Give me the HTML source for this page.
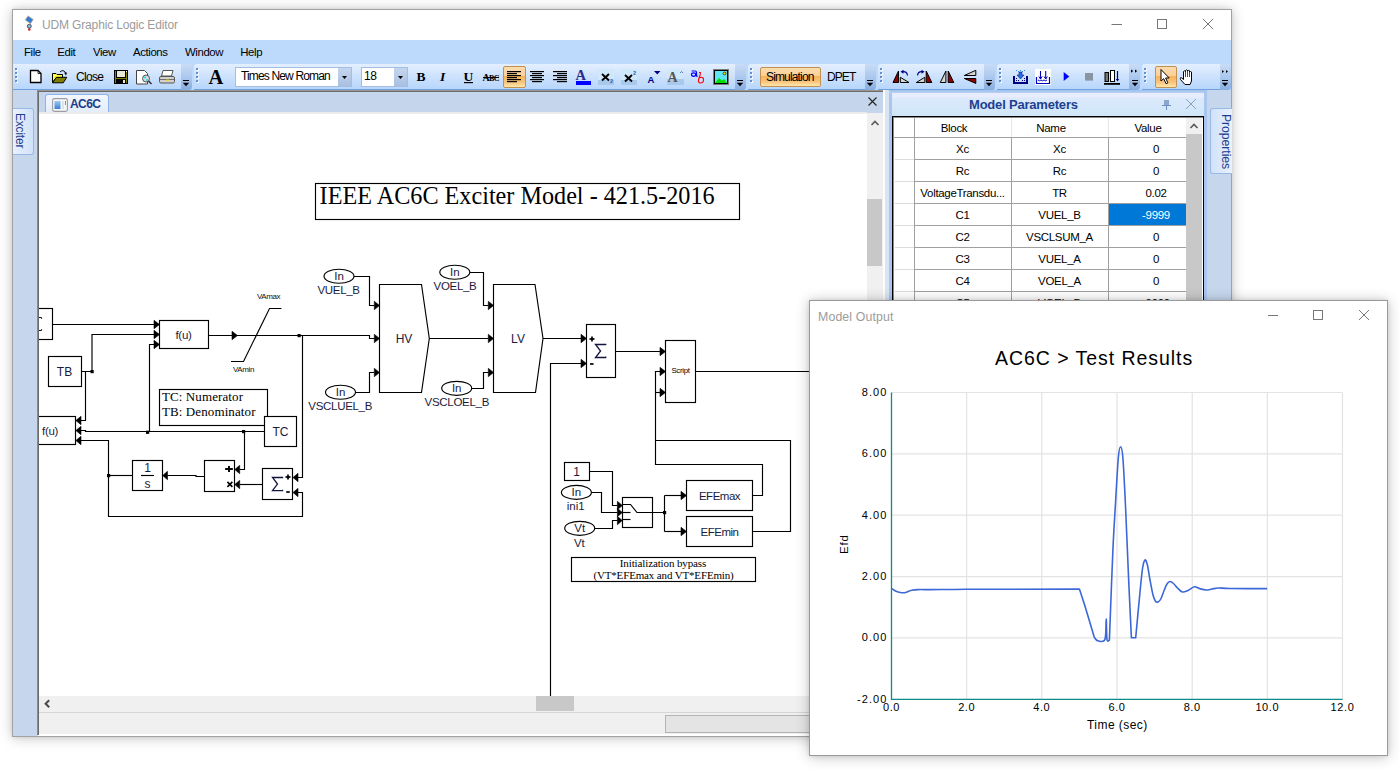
<!DOCTYPE html>
<html><head><meta charset="utf-8">
<style>
*{margin:0;padding:0;box-sizing:border-box}
html,body{width:1399px;height:770px;overflow:hidden;background:#fff;font-family:"Liberation Sans",sans-serif;position:relative}
.a{position:absolute}
.t{position:absolute;white-space:nowrap;line-height:1}
#win{left:12px;top:9px;width:1220px;height:728px;border:1px solid #a2a2a2;background:#fff;box-shadow:0 0 4px rgba(0,0,0,0.1),0 1px 13px rgba(0,0,0,0.22)}
#menubar{left:13px;top:40px;width:1218px;height:50px;background:#bdd9fc}
.strip{position:absolute;top:64px;height:26px;border-radius:3px 3px 0 0;background:linear-gradient(#e4effe,#cfe3fd 45%,#b7d6fc);border-bottom:1px solid #70a0e0}
.ovf{position:absolute;top:64px;height:26px;width:11px;border-radius:0 3px 3px 0;background:linear-gradient(#c9dcf6,#a6c4ec 60%,#86acdf)}
.grip{position:absolute;top:68px;width:2px;height:14px;background:repeating-linear-gradient(#5f8fd6 0 2px,transparent 2px 4px);filter:drop-shadow(1px 1px 0 #fff)}
#leftbar{left:13px;top:90px;width:25px;height:646px;background:#c6d7ed}
#docborder{left:37px;top:90px;width:2px;height:645px;background:linear-gradient(90deg,#8a8a8a 50%,#6a6a6a 50%)}
#tabstrip{left:39px;top:91px;width:844px;height:22px;background:#c5d6ec}
#canvas{left:39px;top:113px;width:828px;height:583px;background:#fff;overflow:hidden}
#vscroll{left:867px;top:113px;width:16px;height:583px;background:#f0f0f0}
#hscroll{left:39px;top:696px;width:828px;height:16px;background:#f0f0f0}
#status{left:39px;top:712px;width:1192px;height:23px;background:#f0f0f0;border-top:1px solid #d6d6d6}
.hl{border:1px solid #c2914f;border-radius:2px;background:linear-gradient(#fbdcae 0%,#f9cf98 45%,#f7b257 46%,#f9c37a 75%,#fde7ac 100%)}
#mo{left:809px;top:300px;width:579px;height:456px;border:1px solid #9a9a9a;background:#fff;box-shadow:0 0 4px rgba(0,0,0,0.1),0 1px 13px rgba(0,0,0,0.24)}
</style></head><body>
<div id="win" class="a"></div>
<div id="menubar" class="a"></div>
<div id="leftbar" class="a"></div>
<div id="docborder" class="a"></div>
<div id="tabstrip" class="a"></div>
<div id="canvas" class="a"></div>
<div id="vscroll" class="a"></div>
<div id="hscroll" class="a"></div>
<div id="status" class="a"></div>
<!-- title bar -->
<svg class="a" style="left:22px;top:15px" width="14" height="18" viewBox="0 0 14 18">
 <rect x="4" y="2.2" width="6.5" height="5" transform="rotate(35 7.2 4.7)" fill="#2f80d2" stroke="#f0b080" stroke-width="0.6"/>
 <circle cx="7.3" cy="11.2" r="2" fill="#8fb7e0" stroke="#222" stroke-width="0.7"/>
 <circle cx="7.3" cy="14.5" r="1.3" fill="#d02020"/>
</svg>
<div class="t" style="left:42px;top:19px;font-size:12px;color:#9b9b9b;letter-spacing:-0.15px">UDM Graphic Logic Editor</div>
<svg class="a" style="left:1100px;top:14px" width="125" height="20">
 <line x1="11.5" y1="10.5" x2="22" y2="10.5" stroke="#777" stroke-width="1"/>
 <rect x="57.5" y="5.5" width="9" height="9" fill="none" stroke="#777" stroke-width="1"/>
 <path d="M103 5 L113 15 M113 5 L103 15" stroke="#777" stroke-width="1"/>
</svg>
<!-- menu -->
<div class="t" style="left:24px;top:46.6px;font-size:11.4px;color:#000;letter-spacing:-0.4px">File</div>
<div class="t" style="left:57.3px;top:46.6px;font-size:11.4px;color:#000;letter-spacing:-0.4px">Edit</div>
<div class="t" style="left:93px;top:46.6px;font-size:11.4px;color:#000;letter-spacing:-0.4px">View</div>
<div class="t" style="left:133px;top:46.6px;font-size:11.4px;color:#000;letter-spacing:-0.4px">Actions</div>
<div class="t" style="left:185px;top:46.6px;font-size:11.4px;color:#000;letter-spacing:-0.4px">Window</div>
<div class="t" style="left:240.3px;top:46.6px;font-size:11.4px;color:#000;letter-spacing:-0.4px">Help</div>
<!-- toolbar strips -->
<div class="strip" style="left:13px;width:170px;border-radius:0 3px 0 0"></div><div class="ovf" style="left:181px"></div>
<div class="strip" style="left:194px;width:544px"></div><div class="ovf" style="left:735px"></div>
<div class="strip" style="left:748px;width:120px"></div><div class="ovf" style="left:865px"></div>
<div class="strip" style="left:878px;width:109px"></div><div class="ovf" style="left:984px"></div>
<div class="strip" style="left:997px;width:135px"></div><div class="ovf" style="left:1129px"></div>
<div class="strip" style="left:1142px;width:81px"></div><div class="ovf" style="left:1220px"></div>
<div class="grip" style="left:15px"></div>
<div class="grip" style="left:196px"></div>
<div class="grip" style="left:750px"></div>
<div class="grip" style="left:880px"></div>
<div class="grip" style="left:999px"></div>
<div class="grip" style="left:1144px"></div>
<!-- overflow arrows -->
<svg class="a" style="left:0;top:60px" width="1399" height="32">
 <g fill="#000" stroke="none">
  <rect x="183" y="20" width="6" height="1" shape-rendering="crispEdges"/><path d="M182.8 22.8 h6.4 l-3.2 3.4 z"/><rect x="737" y="20" width="6" height="1" shape-rendering="crispEdges"/><path d="M736.8 22.8 h6.4 l-3.2 3.4 z"/><rect x="867" y="20" width="6" height="1" shape-rendering="crispEdges"/><path d="M866.8 22.8 h6.4 l-3.2 3.4 z"/><rect x="986" y="20" width="6" height="1" shape-rendering="crispEdges"/><path d="M985.8 22.8 h6.4 l-3.2 3.4 z"/><rect x="1132" y="20" width="6" height="1" shape-rendering="crispEdges"/><path d="M1131.8 22.8 h6.4 l-3.2 3.4 z"/><rect x="1222" y="20" width="6" height="1" shape-rendering="crispEdges"/><path d="M1221.8 22.8 h6.4 l-3.2 3.4 z"/>
  <path d="M1131 9.5 l2.2 1.6 l-2.2 1.6z M1135 9.5 l2.2 1.6 l-2.2 1.6z"/>
  <path d="M1222 10 l2 1.5 l-2 1.5z M1226 10 l2 1.5 l-2 1.5z"/>
 </g>
</svg>

<!-- highlighted buttons -->
<div class="a hl" style="left:503px;top:66px;width:23px;height:22px"></div>
<div class="a hl" style="left:760px;top:67px;width:61px;height:20px"></div>
<div class="a hl" style="left:1155px;top:66px;width:22px;height:22px"></div>
<!-- combos -->
<div class="a" style="left:235px;top:67px;width:117px;height:20px;background:#fff;border:1px solid #a3bde3"></div>
<div class="a" style="left:338px;top:68px;width:13px;height:18px;background:linear-gradient(#c5d6ee,#a9c0e2)"></div>
<div class="t" style="left:241px;top:70px;font-size:12px;color:#000;letter-spacing:-0.85px">Times New Roman</div>
<div class="a" style="left:361px;top:67px;width:47px;height:20px;background:#fff;border:1px solid #a3bde3"></div>
<div class="a" style="left:394px;top:68px;width:13px;height:18px;background:linear-gradient(#c5d6ee,#a9c0e2)"></div>
<div class="t" style="left:364px;top:70px;font-size:12px;color:#000;letter-spacing:-0.5px">18</div>
<div class="t" style="left:76px;top:71px;font-size:12px;color:#000;letter-spacing:-0.7px">Close</div>
<div class="t" style="left:766px;top:71px;font-size:12px;color:#000;letter-spacing:-0.85px">Simulation</div>
<div class="t" style="left:827px;top:71px;font-size:12px;color:#000;letter-spacing:-0.9px">DPET</div>
<svg class="a" style="left:0;top:0" width="1399" height="95" viewBox="0 0 1399 95">
 <!-- combo arrows -->
 <path d="M342 76 h5 l-2.5 3z M398 76 h5 l-2.5 3z" fill="#000"/>
 <!-- new doc -->
 <path d="M30.5 70.5 h7.5 l3 3 v9 h-10.5z" fill="#fff" stroke="#000" stroke-width="1.3"/>
 <path d="M38 70.5 v3 h3" fill="none" stroke="#000" stroke-width="0.8"/>
 <!-- open folder -->
 <path d="M52.5 73.5 h3.5 l1 1 h5.5 v3 h-6 l-4 5z" fill="#ffff40" stroke="#000" stroke-width="1"/>
 <path d="M52.5 82.8 l3.8 -5.5 h10.5 l-3.5 5.5z" fill="#808000" stroke="#000" stroke-width="1"/>
 <path d="M60 72 q3 -3 5.5 0.5" fill="none" stroke="#000" stroke-width="1"/>
 <path d="M64 72.5 h3 l-1 3z" fill="#000"/>
 <!-- save -->
 <rect x="114" y="70" width="14" height="14" fill="#000"/>
 <rect x="115" y="71" width="12" height="12" fill="#808000"/>
 <rect x="116" y="71" width="10" height="7" fill="#000"/>
 <rect x="117" y="71" width="8" height="6" fill="#e8e8d8"/>
 <rect x="116" y="79" width="10" height="5" fill="#000"/>
 <rect x="123" y="80" width="2" height="3" fill="#e8e8d8"/>
 <rect x="126" y="71" width="1" height="1" fill="#fff"/>
 <!-- preview -->
 <path d="M136.5 70.5 h8 l3 3 v10.5 h-11z" fill="#fff" stroke="#444" stroke-width="1"/>
 <circle cx="146" cy="78.5" r="3.5" fill="#d8d8d8" stroke="#555" stroke-width="1"/>
 <circle cx="145" cy="77.5" r="1" fill="#00e0ff"/><circle cx="147" cy="80" r="0.9" fill="#00e0ff"/>
 <path d="M148.5 81 l3 3" stroke="#333" stroke-width="1.6"/>
 <!-- printer -->
 <path d="M161.5 76 l1.5 -5.5 h10 l-1.5 5.5z" fill="#fff" stroke="#555" stroke-width="1"/>
 <rect x="159.5" y="76.5" width="15" height="6.5" rx="1.5" fill="#d0d0d0" stroke="#555" stroke-width="1"/>
 <line x1="160" y1="79.5" x2="174" y2="79.5" stroke="#555" stroke-width="0.8"/>
 <rect x="166" y="79.6" width="3" height="1" fill="#ffd800"/>
 <!-- A -->
 <text x="208.5" y="84" font-family="Liberation Serif" font-weight="700" font-size="20.5" fill="#000">A</text>
 <!-- B I U abc -->
 <text x="416.5" y="81" font-family="Liberation Serif" font-weight="700" font-size="13.5" fill="#000">B</text>
 <text x="440" y="81" font-family="Liberation Serif" font-weight="700" font-style="italic" font-size="13.5" fill="#000">I</text>
 <text x="463.5" y="81" font-family="Liberation Serif" font-weight="700" font-size="13.5" fill="#000">U</text>
 <rect x="464" y="82" width="9" height="1.2" fill="#000"/>
 <text x="482.5" y="81" font-family="Liberation Serif" font-weight="700" font-size="10" fill="#000" letter-spacing="-0.8">A</text>
 <text x="489" y="81" font-family="Liberation Serif" font-weight="700" font-size="8" fill="#000" letter-spacing="-0.5">BC</text>
 <rect x="483" y="77" width="16" height="1" fill="#000"/>
 <!-- align -->
 <g fill="#000">
  <rect x="507" y="71" width="14" height="1.2"/><rect x="507" y="73" width="10" height="1.2"/><rect x="507" y="75" width="14" height="1.2"/><rect x="507" y="77" width="10" height="1.2"/><rect x="507" y="79" width="14" height="1.2"/><rect x="507" y="81" width="10" height="1.2"/>
  <rect x="530" y="71" width="14" height="1.2"/><rect x="532" y="73" width="10" height="1.2"/><rect x="530" y="75" width="14" height="1.2"/><rect x="532" y="77" width="10" height="1.2"/><rect x="530" y="79" width="14" height="1.2"/><rect x="532" y="81" width="10" height="1.2"/>
  <rect x="553" y="71" width="14" height="1.2"/><rect x="557" y="73" width="10" height="1.2"/><rect x="553" y="75" width="14" height="1.2"/><rect x="557" y="77" width="10" height="1.2"/><rect x="553" y="79" width="14" height="1.2"/><rect x="557" y="81" width="10" height="1.2"/>
 </g>
 <!-- font color -->
 <text x="575.5" y="79.5" font-family="Liberation Serif" font-weight="700" font-size="14.5" fill="#2a2a8a">A</text>
 <rect x="576" y="81" width="15" height="4" fill="#0000ff"/>
 <!-- sub/superscript -->
 <rect x="598" y="69" width="16" height="11" fill="#cfe9fb"/><rect x="598" y="80" width="16" height="5" fill="#a9c9ea"/>
 <rect x="621" y="69" width="16" height="11" fill="#cfe9fb"/><rect x="621" y="80" width="16" height="5" fill="#a9c9ea"/>
 <path d="M602 74 l7 6.5 M609 74 l-7 6.5" stroke="#000" stroke-width="1.9"/>
 <text x="610" y="83" font-family="Liberation Sans" font-weight="700" font-size="5.5" fill="#1f5fbf">2</text>
 <path d="M625 75 l7 6.5 M632 75 l-7 6.5" stroke="#000" stroke-width="1.9"/>
 <text x="633" y="75" font-family="Liberation Sans" font-weight="700" font-size="5.5" fill="#1f5fbf">2</text>
 <!-- shrink -->
 <text x="647.5" y="83" font-family="Liberation Sans" font-weight="700" font-size="9.5" fill="#00008c">A</text>
 <path d="M654 71 h6.5 l-3.25 3.5z" fill="#00008c"/>
 <!-- grow -->
 <rect x="667" y="69" width="17" height="10" fill="#cfe9fb"/><rect x="667" y="79" width="17" height="6" fill="#a9c9ea"/>
 <text x="667.5" y="82" font-family="Liberation Serif" font-weight="700" font-size="14" fill="#555">A</text>
 <path d="M680 73 l1.5 -1.5 l1.5 1.5" fill="none" stroke="#4a6fae" stroke-width="0.9"/>
 <!-- ab -->
 <path d="M691.6 71 h3.6 q1.3 0 1.3 1.3 V76.2 h1.2" fill="none" stroke="#0000ff" stroke-width="1.2"/>
 <ellipse cx="693.6" cy="74.6" rx="2.1" ry="1.7" fill="none" stroke="#0000ff" stroke-width="1.2"/>
 <path d="M699 72.5 h1.3 v2 l-1.8 5 q-0.6 3.5 2.2 3.5 q2.8 0 2.8 -3.2 q0 -2.8 -2.6 -2.6 l-1.5 0.8" fill="none" stroke="#ff0000" stroke-width="1.1"/>
 <!-- image -->
 <rect x="713" y="69" width="16" height="16" fill="#7a7a7a"/>
 <rect x="714" y="70" width="14" height="14" fill="#000"/>
 <rect x="715" y="71" width="12" height="12" fill="#5fe6f4"/>
 <path d="M715 83 l4 -5 l3 2.5 l2 -1.5 l3 4z" fill="#00e000"/>
 <circle cx="724.5" cy="73.5" r="1.4" fill="#ffe000" stroke="#000" stroke-width="0.6"/>
 <!-- rotate/flip -->
 <g stroke="#000" stroke-width="1" stroke-linejoin="miter">
  <path d="M893 82.5 L898.5 71 V82.5z" fill="#900000"/>
  <path d="M900.3 77.3 V82.5 H909z" fill="#d4d4d4"/>
  <path d="M916.3 82.5 L924.8 77.3 V82.5z" fill="#d4d4d4"/>
  <path d="M926.2 71 V82.5 H931.8z" fill="#900000"/>
  <path d="M940.3 82.5 L945.9 71 V82.5z" fill="#d4d4d4"/>
  <path d="M948.2 71 V82.5 H953.8z" fill="#900000"/>
  <path d="M964.3 75.5 L975.8 70.3 V75.5z" fill="#d4d4d4"/>
  <path d="M964.3 78.5 H975.8 V83.4z" fill="#900000"/>
 </g>
 <path d="M907.5 75.5 q-0.5 -4 -4.5 -3.8" fill="none" stroke="#00008c" stroke-width="1.2"/>
 <path d="M900.5 71.7 l3 -2 v4z" fill="#00008c"/>
 <path d="M917.5 75.5 q0.5 -4 4.5 -3.8" fill="none" stroke="#00008c" stroke-width="1.2"/>
 <path d="M924.5 71.7 l-3 -2 v4z" fill="#00008c"/>
 <!-- import -->
 <path d="M1013 76 h2 v6 h11 v-6 h2 v8 h-15z" fill="#000080"/>
 <g fill="#000080"><rect x="1016" y="80" width="1" height="1"/><rect x="1018" y="80" width="1" height="1"/><rect x="1022" y="80" width="1" height="1"/><rect x="1024" y="80" width="1" height="1"/><rect x="1016" y="78" width="1" height="1"/><rect x="1024" y="78" width="1" height="1"/></g>
 <g fill="#3a8ef0"><rect x="1016" y="70" width="1" height="1"/><rect x="1018" y="71" width="1" height="1"/><rect x="1022" y="71" width="1" height="1"/><rect x="1024" y="70" width="1" height="1"/><rect x="1020" y="70" width="1" height="1"/></g>
 <path d="M1019 72 h3 v3 h2 l-3.5 4 l-3.5 -4 h2z" fill="#1f6fe0" stroke="#000080" stroke-width="0.5"/>
 <!-- export -->
 <rect x="1035" y="69" width="16" height="16" fill="#fff"/>
 <path d="M1036.5 77 v6.5 h13 v-6.5" fill="none" stroke="#0000c0" stroke-width="1.2"/>
 <path d="M1038 80 q1.5 1.5 3 0 q1.5 1.5 3 0 q1.5 1.5 3 0" fill="none" stroke="#0000c0" stroke-width="1"/>
 <path d="M1040.5 71 v8 M1045.7 71 v8" stroke="#0000c0" stroke-width="1.1"/>
 <path d="M1038.8 76.5 l1.7 2.5 l1.7 -2.5 M1044 76.5 l1.7 2.5 l1.7 -2.5" fill="none" stroke="#0000c0" stroke-width="1"/>
 <!-- play stop -->
 <path d="M1063.7 72 L1069.3 76.5 L1063.7 81z" fill="#0000ff"/>
 <rect x="1085" y="73" width="8" height="7.6" fill="#8a95a2"/>
 <!-- chart -->
 <rect x="1105" y="72.5" width="3.5" height="9" fill="#777" stroke="#000" stroke-width="1"/>
 <rect x="1110.5" y="70.5" width="4" height="11" fill="#fff" stroke="#000" stroke-width="1"/>
 <path d="M1117.5 71 v9" stroke="#00008c" stroke-width="1.2"/><path d="M1115.8 79 h3.4 l-1.7 2.5z" fill="#00008c"/>
 <rect x="1104" y="83" width="16" height="1.8" fill="#000"/>
 <!-- pointer -->
 <path d="M1161 69.5 V81 l2.7 -2.3 l2.4 5 l1.8 -0.9 l-2.3 -4.8 h3.6z" fill="#fff" stroke="#000" stroke-width="1"/>
 <!-- hand -->
 <path d="M1185 84.5 l-4.5 -5 q-1 -1.5 0.5 -2 l2.5 2 v-8 q1 -1.3 2 0 v-1 q1 -1.3 2 0 v0.5 q1 -1.2 2 0 v1 q1 -1 2 0 v9 l-1.5 3.5z" fill="#fff" stroke="#000" stroke-width="1"/>
 <path d="M1185.5 71 v6 M1187.5 70 v7 M1189.5 70.5 v6.5" stroke="#000" stroke-width="0.7"/>
</svg>

<!-- left sidebar -->
<div class="a" style="left:13px;top:108px;width:21px;height:47px;border:1px solid #98b8e6;border-left:none;border-radius:0 3px 3px 0;background:linear-gradient(90deg,#e9f1fd,#d0e2f9)"></div>
<div class="t" style="left:26px;top:112.5px;font-size:12px;color:#1d3d8f;transform-origin:0 0;transform:rotate(90deg);letter-spacing:-0.2px">Exciter</div>
<!-- doc frame -->
<div class="a" style="left:38px;top:90px;width:845px;height:2px;background:linear-gradient(#9d9690 50%,#6c6c6c 50%)"></div>
<div class="a" style="left:45px;top:94px;width:64px;height:19px;z-index:0;border:1px solid #90b3e6;border-bottom:none;border-radius:3px 3px 0 0;background:linear-gradient(#f3f7fd,#e3ecf8)"></div>
<svg class="a" style="left:52px;top:98px" width="16" height="14" viewBox="0 0 16 14">
 <defs><linearGradient id="tg" x1="0" y1="0" x2="0" y2="1"><stop offset="0" stop-color="#9cc8f2"/><stop offset="1" stop-color="#3a7ed6"/></linearGradient></defs>
 <rect x="0.6" y="0.6" width="14.8" height="12.8" rx="1.8" fill="#f4f6f8" stroke="#9a9ea4" stroke-width="1.1"/>
 <rect x="2.5" y="3" width="6" height="8" fill="url(#tg)"/>
 <rect x="10" y="3" width="2" height="8" fill="#dfe3e8"/>
 <rect x="13" y="3" width="1" height="4" fill="#5a9ae0"/>
</svg>
<div class="t" style="left:70px;top:98px;font-size:12px;font-weight:700;color:#1d3b8d;letter-spacing:-0.6px">AC6C</div>
<svg class="a" style="left:866px;top:95px" width="14" height="14"><path d="M2.5 2.5 L10.5 10.5 M10.5 2.5 L2.5 10.5" stroke="#222" stroke-width="1.1"/></svg>
<div class="a" style="left:39px;top:112px;width:828px;height:2px;background:#ececec"></div>
<!-- v scroll -->
<div class="a" style="left:867px;top:199px;width:15px;height:67px;background:#c8c8c8"></div>
<svg class="a" style="left:867px;top:116px" width="16" height="14"><path d="M4.5 9 L8 5.5 L11.5 9" fill="none" stroke="#5a5a5a" stroke-width="1.6"/></svg>
<!-- h scroll -->
<div class="a" style="left:536px;top:696px;width:38px;height:15px;background:#c8c8c8"></div>
<svg class="a" style="left:40px;top:696px" width="14" height="16"><path d="M9.2 4.3 L5.6 7.8 L9.2 11.3" fill="none" stroke="#4a4a4a" stroke-width="2"/></svg>
<div class="a" style="left:39px;top:734px;width:1192px;height:1px;background:#fff"></div>
<div class="a" style="left:665px;top:715px;width:170px;height:18px;background:#e4e4e4;border:1px solid #b4b4b4"></div>

<svg class="a" style="left:39px;top:113px" width="828" height="583" viewBox="39 113 828 583"><style>.dg path,.dg rect,.dg ellipse,.dg circle{stroke:#000;stroke-width:1.15;fill:none}.dg path.f,.dg circle.f{fill:#000;stroke:none}.dg rect[fill="#fff"],.dg ellipse,.dg path[fill="#fff"]{fill:#fff}</style><g class="dg"><rect x="20.5" y="308.5" width="32.0" height="31.0" fill="#fff"/>
<path d="M38 317.5 h3 l0.9 1.2 M38 330.5 h3 l0.9 -1.2" style="stroke:#111;stroke-width:1.1;fill:none"/>
<path d="M52.5 324.5 L154 324.5"/>
<path class="f" d="M154 320.3 L159.5 324.5 L154 328.7z" style="stroke:#000;stroke-width:0.6;stroke-linejoin:round"/>
<rect x="159.5" y="320.5" width="49.0" height="28.0" fill="#fff"/>
<path class="f" d="M154 330.3 L159.5 334.5 L154 338.7z" style="stroke:#000;stroke-width:0.6;stroke-linejoin:round"/>
<path class="f" d="M154 340.3 L159.5 344.5 L154 348.7z" style="stroke:#000;stroke-width:0.6;stroke-linejoin:round"/>
<rect x="48.5" y="356.5" width="33.0" height="30.0" fill="#fff"/>
<path d="M81.5 371.5 L92 371.5 L92 334.5 L154 334.5"/>
<rect class="f" x="90.5" y="370.0" width="3.2" height="3.2" style="fill:#000;stroke:none"/>
<path d="M85.5 371.5 L85.5 420.5 L81 420.5"/>
<path class="f" d="M81 416.3 L75.8 420.5 L81 424.7z" style="stroke:#000;stroke-width:0.6;stroke-linejoin:round"/>
<rect x="10.5" y="416.5" width="65.0" height="28.0" fill="#fff"/>
<path class="f" d="M81 426.3 L75.8 430.5 L81 434.7z" style="stroke:#000;stroke-width:0.6;stroke-linejoin:round"/>
<path class="f" d="M81 436.3 L75.8 440.5 L81 444.7z" style="stroke:#000;stroke-width:0.6;stroke-linejoin:round"/>
<path d="M81 430.5 L85.5 430.5 L85.5 431.5 L264.5 431.5"/>
<rect class="f" x="146.0" y="430.7" width="3.2" height="3.2" style="fill:#000;stroke:none"/>
<path d="M149.5 431.5 L149.5 344.5 L154 344.5"/>
<rect class="f" x="242.0" y="430.0" width="3.2" height="3.2" style="fill:#000;stroke:none"/>
<path d="M244.5 431.5 L244.5 469.5 L239.7 469.5"/>
<path class="f" d="M239.7 465.3 L234.8 469.5 L239.7 473.7z" style="stroke:#000;stroke-width:0.6;stroke-linejoin:round"/>
<path d="M81 440.5 L108.5 440.5 L108.5 516.5 L302.5 516.5 L302.5 492.5 L298 492.5"/>
<path class="f" d="M298 488.3 L293 492.5 L298 496.7z" style="stroke:#000;stroke-width:0.6;stroke-linejoin:round"/>
<rect class="f" x="107.0" y="474.0" width="3.2" height="3.2" style="fill:#000;stroke:none"/>
<path d="M108.5 475.5 L132.5 475.5"/>
<rect x="132.5" y="460.5" width="30.0" height="30.0" fill="#fff"/>
<path d="M141 475.5 L154 475.5"/>
<path class="f" d="M167.5 471.3 L162.7 475.5 L167.5 479.7z" style="stroke:#000;stroke-width:0.6;stroke-linejoin:round"/>
<path d="M167.5 475.5 L196 475.5 L196 476.5 L204.5 476.5"/>
<rect x="204.5" y="460.5" width="30.0" height="31.0" fill="#fff"/>
<rect class="f" x="225.1" y="468.05" width="7.8" height="1.9" style="fill:#000;stroke:none"/>
<rect class="f" x="228.05" y="466.0" width="1.9" height="6" style="fill:#000;stroke:none"/>
<path d="M227.4 481.9 L232.4 486.9 M232.4 481.9 L227.4 486.9" style="stroke:#000;stroke-width:1.6"/>
<path class="f" d="M239.7 480.3 L234.8 484.5 L239.7 488.7z" style="stroke:#000;stroke-width:0.6;stroke-linejoin:round"/>
<path d="M239.7 484.5 L262.5 484.5"/>
<rect x="262.5" y="468.5" width="30.0" height="31.0" fill="#fff"/>
<path d="M282.5 478.2 V477.5 H272.5 L277.46 484.1 L272.5 490.7 H282.5 V489.7" style="stroke:#141440;stroke-width:1.3;fill:none;stroke-linejoin:miter"/>
<rect class="f" x="285.5" y="476.15" width="5" height="1.7" style="fill:#000;stroke:none"/>
<rect class="f" x="287.15" y="474.5" width="1.7" height="5" style="fill:#000;stroke:none"/>
<rect class="f" x="286.25" y="491.15" width="3.5" height="1.7" style="fill:#000;stroke:none"/>
<path class="f" d="M298 473.3 L293 477.5 L298 481.7z" style="stroke:#000;stroke-width:0.6;stroke-linejoin:round"/>
<path d="M302.5 335.5 L302.5 477.5 L298 477.5"/>
<path d="M208.5 335.5 L369.5 335.5 L369.5 338.5 L374.3 338.5"/>
<path class="f" d="M232 331.3 L237.5 335.5 L232 339.7z" style="stroke:#000;stroke-width:0.6;stroke-linejoin:round"/>
<rect class="f" x="297.5" y="334.0" width="3.2" height="3.2" style="fill:#000;stroke:none"/>
<path d="M231 361.5 L243.5 361.5 L269.5 308.5 L281.5 308.5"/>
<rect x="159.5" y="389.5" width="108.0" height="36.0" fill="#fff"/>
<rect x="264.5" y="416.5" width="32.0" height="30.0" fill="#fff"/>
<rect x="315.5" y="183.5" width="424.0" height="36.0" fill="#fff"/>
<ellipse cx="339" cy="276.2" rx="15" ry="7" fill="#fff"/>
<path d="M354 276.5 L369.5 276.5 L369.5 305.5 L374.3 305.5"/>
<path class="f" d="M374.3 301.3 L379.5 305.5 L374.3 309.7z" style="stroke:#000;stroke-width:0.6;stroke-linejoin:round"/>
<path d="M379.5 284.5 L421.5 284.5 L429.3 338.5 L421.5 392.5 L379.5 392.5z" fill="#fff"/>
<path class="f" d="M374.3 334.3 L379.5 338.5 L374.3 342.7z" style="stroke:#000;stroke-width:0.6;stroke-linejoin:round"/>
<path class="f" d="M374.3 368.3 L379.5 372.5 L374.3 376.7z" style="stroke:#000;stroke-width:0.6;stroke-linejoin:round"/>
<ellipse cx="340.5" cy="392.2" rx="15" ry="7" fill="#fff"/>
<path d="M355.5 392.5 L369.5 392.5 L369.5 372.5 L374.3 372.5"/>
<path d="M429.3 338.5 L488.3 338.5"/>
<path class="f" d="M488.3 334.3 L493.5 338.5 L488.3 342.7z" style="stroke:#000;stroke-width:0.6;stroke-linejoin:round"/>
<ellipse cx="454.8" cy="272.2" rx="15" ry="7" fill="#fff"/>
<path d="M470 272.5 L483.5 272.5 L483.5 305.5 L488.3 305.5"/>
<path class="f" d="M488.3 301.3 L493.5 305.5 L488.3 309.7z" style="stroke:#000;stroke-width:0.6;stroke-linejoin:round"/>
<path d="M493.5 284.5 L535 284.5 L543 338.5 L535.5 392.5 L493.5 392.5z" fill="#fff"/>
<path class="f" d="M488.3 368.3 L493.5 372.5 L488.3 376.7z" style="stroke:#000;stroke-width:0.6;stroke-linejoin:round"/>
<ellipse cx="456.7" cy="388.3" rx="15" ry="7" fill="#fff"/>
<path d="M471.5 388.5 L483.5 388.5 L483.5 372.5 L488.3 372.5"/>
<path d="M543 338.5 L581 338.5"/>
<path class="f" d="M581 334.3 L586.5 338.5 L581 342.7z" style="stroke:#000;stroke-width:0.6;stroke-linejoin:round"/>
<rect x="586.5" y="324.5" width="29.0" height="53.0" fill="#fff"/>
<path d="M605.7 345.2 V344.5 H595.5 L600.5640000000001 351.0 L595.5 357.5 H605.7 V356.5" style="stroke:#141440;stroke-width:1.3;fill:none;stroke-linejoin:miter"/>
<rect class="f" x="589.5" y="338.15" width="5" height="1.7" style="fill:#000;stroke:none"/>
<rect class="f" x="591.15" y="336.5" width="1.7" height="5" style="fill:#000;stroke:none"/>
<rect class="f" x="590.05" y="363.15" width="3.5" height="1.7" style="fill:#000;stroke:none"/>
<path d="M550.5 696 L550.5 363.5 L581 363.5"/>
<path class="f" d="M581 359.3 L586.5 363.5 L581 367.7z" style="stroke:#000;stroke-width:0.6;stroke-linejoin:round"/>
<path d="M615.5 351.5 L660 351.5"/>
<path class="f" d="M660 347.3 L665.5 351.5 L660 355.7z" style="stroke:#000;stroke-width:0.6;stroke-linejoin:round"/>
<rect x="665.5" y="340.5" width="30.0" height="62.0" fill="#fff"/>
<path class="f" d="M660 367.3 L665.5 371.5 L660 375.7z" style="stroke:#000;stroke-width:0.6;stroke-linejoin:round"/>
<path class="f" d="M660 388.3 L665.5 392.5 L660 396.7z" style="stroke:#000;stroke-width:0.6;stroke-linejoin:round"/>
<path d="M660 371.5 L655.5 371.5 L655.5 464.5 L762.5 464.5 L762.5 495.5 L752.5 495.5"/>
<path d="M655.5 392.5 L660 392.5"/>
<path d="M655.5 440.5 L790.5 440.5 L790.5 531.5 L752.5 531.5"/>
<path d="M695.5 371.5 L830 371.5"/>
<rect x="564.5" y="462.5" width="25.0" height="18.0" fill="#fff"/>
<path d="M589.5 471.5 L612.5 471.5 L612.5 505.5 L617.4 505.5"/>
<path class="f" d="M617.4 501.3 L622.3 505.5 L617.4 509.7z" style="stroke:#000;stroke-width:0.6;stroke-linejoin:round"/>
<ellipse cx="576.4" cy="492.4" rx="15" ry="7" fill="#fff"/>
<path d="M591.4 492.5 L601.5 492.5 L601.5 512.5 L617.4 512.5"/>
<path class="f" d="M617.4 508.3 L622.3 512.5 L617.4 516.7z" style="stroke:#000;stroke-width:0.6;stroke-linejoin:round"/>
<ellipse cx="579.7" cy="528.3" rx="15" ry="7" fill="#fff"/>
<path d="M594.6 528.5 L612.5 528.5 L612.5 520.5 L617.4 520.5"/>
<path class="f" d="M617.4 516.3 L622.3 520.5 L617.4 524.7z" style="stroke:#000;stroke-width:0.6;stroke-linejoin:round"/>
<rect x="622.5" y="497.5" width="30.0" height="30.0" fill="#fff"/>
<path d="M622.5 504.5 L630.5 504.5 L637 512.5 L664.5 512.5"/>
<path d="M622.5 512.5 L630.5 512.5"/>
<path d="M622.5 519.5 L630.5 519.5"/>
<rect class="f" x="663.0" y="511.0" width="3.2" height="3.2" style="fill:#000;stroke:none"/>
<path d="M664.5 495.5 L664.5 531.5"/>
<path d="M664.5 495.5 L681 495.5"/>
<path class="f" d="M681 491.3 L686.5 495.5 L681 499.7z" style="stroke:#000;stroke-width:0.6;stroke-linejoin:round"/>
<path d="M664.5 531.5 L681 531.5"/>
<path class="f" d="M681 527.3 L686.5 531.5 L681 535.7z" style="stroke:#000;stroke-width:0.6;stroke-linejoin:round"/>
<rect x="686.5" y="480.5" width="66.0" height="30.0" fill="#fff"/>
<rect x="686.5" y="516.5" width="66.0" height="30.0" fill="#fff"/>
<rect x="571.5" y="557.5" width="184.0" height="24.0" fill="#fff"/></g>
<text x="183.5" y="339" font-size="11.5" text-anchor="middle" font-family="Liberation Sans" letter-spacing="-0.3" fill="#1b1b3c">f(u)</text>
<text x="64.5" y="375.5" font-size="12" text-anchor="middle" font-family="Liberation Sans" letter-spacing="0" fill="#1b1b3c">TB</text>
<text x="42" y="434.5" font-size="11.5" text-anchor="start" font-family="Liberation Sans" letter-spacing="-0.3" fill="#1b1b3c">f(u)</text>
<text x="147.5" y="472" font-size="12" text-anchor="middle" font-family="Liberation Sans" letter-spacing="0" fill="#1b1b3c">1</text>
<text x="147.5" y="488" font-size="12" text-anchor="middle" font-family="Liberation Sans" letter-spacing="0" fill="#1b1b3c">s</text>
<text x="268.5" y="299.4" font-size="8" text-anchor="middle" font-family="Liberation Sans" letter-spacing="-0.4" fill="#111">VAmax</text>
<text x="243.5" y="372.4" font-size="8" text-anchor="middle" font-family="Liberation Sans" letter-spacing="-0.4" fill="#111">VAmin</text>
<text x="162" y="400.5" font-size="13" text-anchor="start" font-family="Liberation Serif" letter-spacing="0.1" fill="#000">TC: Numerator</text>
<text x="162" y="415.5" font-size="13" text-anchor="start" font-family="Liberation Serif" letter-spacing="0.1" fill="#000">TB: Denominator</text>
<text x="280.5" y="435.8" font-size="12" text-anchor="middle" font-family="Liberation Sans" letter-spacing="0" fill="#1b1b3c">TC</text>
<text x="319.6" y="204" font-size="24.2" text-anchor="start" font-family="Liberation Serif" letter-spacing="0" fill="#000">IEEE AC6C Exciter Model - 421.5-2016</text>
<text x="339" y="280.2" font-size="11.5" text-anchor="middle" font-family="Liberation Sans" letter-spacing="0" fill="#1b1b3c">In</text>
<text x="338.6" y="294" font-size="11.5" text-anchor="middle" font-family="Liberation Sans" letter-spacing="-0.3" fill="#1b1b3c">VUEL_B</text>
<text x="404" y="342.9" font-size="12" text-anchor="middle" font-family="Liberation Sans" letter-spacing="0" fill="#1b1b3c">HV</text>
<text x="340.5" y="396.2" font-size="11.5" text-anchor="middle" font-family="Liberation Sans" letter-spacing="0" fill="#1b1b3c">In</text>
<text x="340.2" y="409.8" font-size="11.5" text-anchor="middle" font-family="Liberation Sans" letter-spacing="-0.3" fill="#1b1b3c">VSCLUEL_B</text>
<text x="454.8" y="276.2" font-size="11.5" text-anchor="middle" font-family="Liberation Sans" letter-spacing="0" fill="#1b1b3c">In</text>
<text x="455" y="289.8" font-size="11.5" text-anchor="middle" font-family="Liberation Sans" letter-spacing="-0.3" fill="#1b1b3c">VOEL_B</text>
<text x="518" y="342.9" font-size="12" text-anchor="middle" font-family="Liberation Sans" letter-spacing="0" fill="#1b1b3c">LV</text>
<text x="456.7" y="392.3" font-size="11.5" text-anchor="middle" font-family="Liberation Sans" letter-spacing="0" fill="#1b1b3c">In</text>
<text x="456.8" y="405.5" font-size="11.5" text-anchor="middle" font-family="Liberation Sans" letter-spacing="-0.3" fill="#1b1b3c">VSCLOEL_B</text>
<text x="680.5" y="373.3" font-size="7.8" text-anchor="middle" font-family="Liberation Sans" letter-spacing="-0.3" fill="#000">Script</text>
<text x="576.5" y="475.5" font-size="12" text-anchor="middle" font-family="Liberation Sans" letter-spacing="0" fill="#1b1b3c">1</text>
<text x="576.4" y="496.4" font-size="11.5" text-anchor="middle" font-family="Liberation Sans" letter-spacing="0" fill="#1b1b3c">In</text>
<text x="575.7" y="509.8" font-size="11.5" text-anchor="middle" font-family="Liberation Sans" letter-spacing="0" fill="#1b1b3c">ini1</text>
<text x="579.7" y="532.4" font-size="11.5" text-anchor="middle" font-family="Liberation Sans" letter-spacing="0" fill="#1b1b3c">Vt</text>
<text x="579.4" y="546.5" font-size="11.5" text-anchor="middle" font-family="Liberation Sans" letter-spacing="0" fill="#1b1b3c">Vt</text>
<text x="719.5" y="499.8" font-size="11.5" text-anchor="middle" font-family="Liberation Sans" letter-spacing="-0.5" fill="#1b1b3c">EFEmax</text>
<text x="719.5" y="536" font-size="11.5" text-anchor="middle" font-family="Liberation Sans" letter-spacing="-0.5" fill="#1b1b3c">EFEmin</text>
<text x="663" y="567" font-size="11" text-anchor="middle" font-family="Liberation Serif" letter-spacing="-0.12" fill="#000">Initialization bypass</text>
<text x="663.5" y="578.5" font-size="11" text-anchor="middle" font-family="Liberation Serif" letter-spacing="-0.15" fill="#000">(VT*EFEmax and VT*EFEmin)</text></svg>
<div class="a" style="left:883px;top:90px;width:2px;height:210px;background:#fbfcfe"></div>
<div class="a" style="left:885px;top:90px;width:4px;height:210px;background:#dbe5f2"></div>
<div class="a" style="left:889px;top:90px;width:3px;height:210px;background:#a9c6ee"></div>
<div class="a" style="left:889px;top:90px;width:318px;height:3px;background:linear-gradient(#9fc0ec,#b8d2f4)"></div>
<div class="a" style="left:892px;top:93px;width:312px;height:207px;background:#fff"></div>
<div class="a" style="left:892px;top:93px;width:312px;height:23px;background:linear-gradient(#e9ecfd 0,#e9ecfd 4px,#dbe9fb 5px,#cfe7f8)"></div>
<div class="a" style="left:1204px;top:90px;width:3px;height:210px;background:#a9c6ee"></div>
<div class="a" style="left:1207px;top:90px;width:24px;height:210px;background:#c6d7ed"></div>
<div class="a" style="left:1210px;top:108px;width:22px;height:66px;border:1px solid #98b8e6;border-right:none;border-radius:3px 0 0 3px;background:linear-gradient(90deg,#d0e2f9,#e9f1fd)"></div>
<div class="t" style="left:1231.5px;top:113.5px;font-size:12.3px;color:#1d3d8f;transform-origin:0 0;transform:rotate(90deg);letter-spacing:-0.1px">Properties</div>
<div class="t" style="left:969px;top:97.5px;font-size:13px;font-weight:700;color:#1e3f91;letter-spacing:-0.2px">Model Parameters</div>
<svg class="a" style="left:1158px;top:96px" width="42" height="16"><rect x="6" y="4" width="5" height="5" fill="#8da6cc"/><path d="M4 9.5 h9 M8.5 9.5 v4.5" fill="none" stroke="#6f8fc0" stroke-width="1"/><path d="M28 3 L38 13 M38 3 L28 13" stroke="#8aa0c0" stroke-width="1"/></svg>
<div class="a" style="left:892px;top:116px;width:312px;height:184px;border:1px solid #000;border-bottom:none;background:#fff;box-shadow:inset 1px 1px 0 #8a8a8a"></div>
<div class="a" style="left:914px;top:118px;width:1px;height:182px;background:#a0a0a0"></div>
<div class="a" style="left:893px;top:137px;width:21px;height:1px;background:#a0a0a0"></div>
<div class="a" style="left:1011px;top:118px;width:1px;height:20px;background:#e6e6e6"></div>
<div class="a" style="left:1108px;top:118px;width:1px;height:20px;background:#e6e6e6"></div>
<div class="a" style="left:1011px;top:138px;width:1px;height:162px;background:#a0a0a0"></div>
<div class="a" style="left:1108px;top:138px;width:1px;height:162px;background:#a0a0a0"></div>
<div class="t" style="left:954px;top:123px;font-size:11.5px;color:#000;transform:translateX(-50%);letter-spacing:-0.3px">Block</div>
<div class="t" style="left:1051px;top:123px;font-size:11.5px;color:#000;transform:translateX(-50%);letter-spacing:-0.3px">Name</div>
<div class="t" style="left:1148px;top:123px;font-size:11.5px;color:#000;transform:translateX(-50%);letter-spacing:-0.3px">Value</div>
<div class="a" style="left:914px;top:137px;width:272px;height:1px;background:#a0a0a0"></div>
<div class="t" style="left:962.5px;top:144px;font-size:11.5px;color:#000;transform:translateX(-50%);letter-spacing:-0.3px">Xc</div>
<div class="t" style="left:1059.5px;top:144px;font-size:11.5px;color:#000;transform:translateX(-50%);letter-spacing:-0.3px">Xc</div>
<div class="t" style="left:1156px;top:144px;font-size:11.5px;color:#000;transform:translateX(-50%);letter-spacing:-0.3px">0</div>
<div class="a" style="left:914px;top:159px;width:272px;height:1px;background:#a0a0a0"></div>
<div class="a" style="left:895px;top:159px;width:19px;height:1px;background:#dcdcdc"></div>
<div class="t" style="left:962.5px;top:166px;font-size:11.5px;color:#000;transform:translateX(-50%);letter-spacing:-0.3px">Rc</div>
<div class="t" style="left:1059.5px;top:166px;font-size:11.5px;color:#000;transform:translateX(-50%);letter-spacing:-0.3px">Rc</div>
<div class="t" style="left:1156px;top:166px;font-size:11.5px;color:#000;transform:translateX(-50%);letter-spacing:-0.3px">0</div>
<div class="a" style="left:914px;top:181px;width:272px;height:1px;background:#a0a0a0"></div>
<div class="a" style="left:895px;top:181px;width:19px;height:1px;background:#dcdcdc"></div>
<div class="t" style="left:962.5px;top:188px;font-size:11.5px;color:#000;transform:translateX(-50%);letter-spacing:-0.32px">VoltageTransdu...</div>
<div class="t" style="left:1059.5px;top:188px;font-size:11.5px;color:#000;transform:translateX(-50%);letter-spacing:-0.3px">TR</div>
<div class="t" style="left:1156px;top:188px;font-size:11.5px;color:#000;transform:translateX(-50%);letter-spacing:-0.3px">0.02</div>
<div class="a" style="left:914px;top:203px;width:272px;height:1px;background:#a0a0a0"></div>
<div class="a" style="left:895px;top:203px;width:19px;height:1px;background:#dcdcdc"></div>
<div class="a" style="left:1109px;top:204px;width:77px;height:21px;background:#0078d7"></div>
<div class="t" style="left:962.5px;top:210px;font-size:11.5px;color:#000;transform:translateX(-50%);letter-spacing:-0.3px">C1</div>
<div class="t" style="left:1059.5px;top:210px;font-size:11.5px;color:#000;transform:translateX(-50%);letter-spacing:-0.3px">VUEL_B</div>
<div class="t" style="left:1156px;top:210px;font-size:11.5px;color:#fff;transform:translateX(-50%);letter-spacing:-0.3px">-9999</div>
<div class="a" style="left:914px;top:225px;width:272px;height:1px;background:#a0a0a0"></div>
<div class="a" style="left:895px;top:225px;width:19px;height:1px;background:#dcdcdc"></div>
<div class="t" style="left:962.5px;top:232px;font-size:11.5px;color:#000;transform:translateX(-50%);letter-spacing:-0.3px">C2</div>
<div class="t" style="left:1059.5px;top:232px;font-size:11.5px;color:#000;transform:translateX(-50%);letter-spacing:-0.3px">VSCLSUM_A</div>
<div class="t" style="left:1156px;top:232px;font-size:11.5px;color:#000;transform:translateX(-50%);letter-spacing:-0.3px">0</div>
<div class="a" style="left:914px;top:247px;width:272px;height:1px;background:#a0a0a0"></div>
<div class="a" style="left:895px;top:247px;width:19px;height:1px;background:#dcdcdc"></div>
<div class="t" style="left:962.5px;top:254px;font-size:11.5px;color:#000;transform:translateX(-50%);letter-spacing:-0.3px">C3</div>
<div class="t" style="left:1059.5px;top:254px;font-size:11.5px;color:#000;transform:translateX(-50%);letter-spacing:-0.3px">VUEL_A</div>
<div class="t" style="left:1156px;top:254px;font-size:11.5px;color:#000;transform:translateX(-50%);letter-spacing:-0.3px">0</div>
<div class="a" style="left:914px;top:269px;width:272px;height:1px;background:#a0a0a0"></div>
<div class="a" style="left:895px;top:269px;width:19px;height:1px;background:#dcdcdc"></div>
<div class="t" style="left:962.5px;top:276px;font-size:11.5px;color:#000;transform:translateX(-50%);letter-spacing:-0.3px">C4</div>
<div class="t" style="left:1059.5px;top:276px;font-size:11.5px;color:#000;transform:translateX(-50%);letter-spacing:-0.3px">VOEL_A</div>
<div class="t" style="left:1156px;top:276px;font-size:11.5px;color:#000;transform:translateX(-50%);letter-spacing:-0.3px">0</div>
<div class="a" style="left:914px;top:291px;width:272px;height:1px;background:#a0a0a0"></div>
<div class="a" style="left:895px;top:291px;width:19px;height:1px;background:#dcdcdc"></div>
<div class="t" style="left:962.5px;top:298px;font-size:11.5px;color:#000;transform:translateX(-50%);letter-spacing:-0.3px">C5</div>
<div class="t" style="left:1059.5px;top:298px;font-size:11.5px;color:#000;transform:translateX(-50%);letter-spacing:-0.3px">VOEL_B</div>
<div class="t" style="left:1156px;top:298px;font-size:11.5px;color:#000;transform:translateX(-50%);letter-spacing:-0.3px">-9999</div>
<div class="a" style="left:1186px;top:118px;width:16px;height:182px;background:#f0f0f0"></div>
<div class="a" style="left:1186px;top:134px;width:16px;height:166px;background:#c8c8c8"></div>
<svg class="a" style="left:1186px;top:119px" width="16" height="14"><path d="M4.5 9 L8 5.5 L11.5 9" fill="none" stroke="#5a5a5a" stroke-width="1.6"/></svg>
<div id="mo" class="a"></div>
<div class="t" style="left:818px;top:310.5px;font-size:12.3px;color:#9b9b9b;letter-spacing:0.15px">Model Output</div>
<svg class="a" style="left:1260px;top:305px" width="120" height="20"><line x1="8" y1="10.5" x2="18" y2="10.5" stroke="#777"/><rect x="53.5" y="5.5" width="9" height="9" fill="none" stroke="#777"/><path d="M99 5 L109 15 M109 5 L99 15" stroke="#777"/></svg>
<div class="t" style="left:995px;top:349px;font-size:19.5px;color:#000;letter-spacing:0.95px">AC6C &gt; Test Results</div>
<svg class="a" style="left:809px;top:300px" width="579" height="456" viewBox="809 300 579 456"><line x1="966.7" y1="392.5" x2="966.7" y2="699.3" stroke="#e3e3e3" stroke-width="1.2"/><line x1="1041.8" y1="392.5" x2="1041.8" y2="699.3" stroke="#e3e3e3" stroke-width="1.2"/><line x1="1117.0" y1="392.5" x2="1117.0" y2="699.3" stroke="#e3e3e3" stroke-width="1.2"/><line x1="1192.2" y1="392.5" x2="1192.2" y2="699.3" stroke="#e3e3e3" stroke-width="1.2"/><line x1="1267.3" y1="392.5" x2="1267.3" y2="699.3" stroke="#e3e3e3" stroke-width="1.2"/><line x1="1342.5" y1="392.5" x2="1342.5" y2="699.3" stroke="#e3e3e3" stroke-width="1.2"/><line x1="891.5" y1="392.5" x2="1342.5" y2="392.5" stroke="#e3e3e3" stroke-width="1.2"/><line x1="891.5" y1="453.9" x2="1342.5" y2="453.9" stroke="#e3e3e3" stroke-width="1.2"/><line x1="891.5" y1="515.2" x2="1342.5" y2="515.2" stroke="#e3e3e3" stroke-width="1.2"/><line x1="891.5" y1="576.6" x2="1342.5" y2="576.6" stroke="#e3e3e3" stroke-width="1.2"/><line x1="891.5" y1="637.9" x2="1342.5" y2="637.9" stroke="#e3e3e3" stroke-width="1.2"/><path d="M891.5 392.5 V699.3 H1342.5" fill="none" stroke="#0f8a8a" stroke-width="1.3"/><path d="M892 588.6 C892.67 589.05 894.35 590.60 896 591.3 C897.65 592.00 900.15 592.65 901.9 592.8 C903.65 592.95 904.87 592.63 906.5 592.2 C908.13 591.77 909.78 590.63 911.7 590.2 C913.62 589.77 914.95 589.70 918 589.6 C921.05 589.50 924.67 589.62 930 589.6 C935.33 589.58 944.00 589.55 950 589.5 C956.00 589.45 963.33 589.33 966 589.3 L1079.4 589.1 C1080.45 592.35 1083.22 600.57 1085.7 608.6 C1088.18 616.63 1092.87 632.52 1094.3 637.3 C1094.83 637.85 1095.73 640.22 1097.5 640.6 C1099.27 640.98 1103.45 643.18 1104.9 639.6 C1106.35 636.02 1105.85 619.12 1106.2 619.1 C1106.55 619.08 1106.47 636.02 1107 639.5 C1107.53 642.98 1109.00 639.92 1109.4 640 C1109.98 625.00 1111.85 573.33 1112.9 550 C1113.95 526.67 1114.80 515.33 1115.7 500 C1116.60 484.67 1117.48 466.87 1118.3 458 C1119.12 449.13 1119.83 446.80 1120.6 446.8 C1121.37 446.80 1122.07 447.80 1122.9 458 C1123.73 468.20 1124.65 487.90 1125.6 508 C1126.55 528.10 1127.63 556.98 1128.6 578.6 C1129.57 600.22 1130.93 627.85 1131.4 637.7 L1135.7 637.7 C1136.42 630.08 1138.85 603.62 1140 592 C1141.15 580.38 1141.77 573.33 1142.6 568 C1143.43 562.67 1144.20 560.50 1145 560 C1145.80 559.50 1146.57 561.67 1147.4 565 C1148.23 568.33 1149.07 575.00 1150 580 C1150.93 585.00 1152.08 591.47 1153 595 C1153.92 598.53 1154.67 600.03 1155.5 601.2 C1156.33 602.37 1157.12 602.37 1158 602 C1158.88 601.63 1159.75 601.00 1160.8 599 C1161.85 597.00 1163.27 592.50 1164.3 590 C1165.33 587.50 1166.05 585.42 1167 584 C1167.95 582.58 1168.92 581.58 1170 581.5 C1171.08 581.42 1172.25 582.42 1173.5 583.5 C1174.75 584.58 1176.03 586.58 1177.5 588 C1178.97 589.42 1180.55 591.58 1182.3 592 C1184.05 592.42 1186.00 591.37 1188 590.5 C1190.00 589.63 1192.30 587.08 1194.3 586.8 C1196.30 586.52 1198.00 588.27 1200 588.8 C1202.00 589.33 1204.30 589.97 1206.3 590 C1208.30 590.03 1209.95 589.33 1212 589 C1214.05 588.67 1215.60 588.08 1218.6 588 C1221.60 587.92 1221.92 588.40 1230 588.5 C1238.08 588.60 1260.92 588.58 1267.1 588.6" fill="none" stroke="#3c67d6" stroke-width="1.6" stroke-linejoin="round"/></svg>
<div class="t" style="right:511.5px;top:387.0px;font-size:11px;color:#000;letter-spacing:1.1px">8.00</div>
<div class="t" style="right:511.5px;top:448.4px;font-size:11px;color:#000;letter-spacing:1.1px">6.00</div>
<div class="t" style="right:511.5px;top:509.7px;font-size:11px;color:#000;letter-spacing:1.1px">4.00</div>
<div class="t" style="right:511.5px;top:571.1px;font-size:11px;color:#000;letter-spacing:1.1px">2.00</div>
<div class="t" style="right:511.5px;top:632.4px;font-size:11px;color:#000;letter-spacing:1.1px">0.00</div>
<div class="t" style="right:511.5px;top:693.8px;font-size:11px;color:#000;letter-spacing:1.1px">-2.00</div>
<div class="t" style="left:891.5px;top:702px;font-size:11px;color:#000;letter-spacing:0.6px;transform:translateX(-50%)">0.0</div>
<div class="t" style="left:966.7px;top:702px;font-size:11px;color:#000;letter-spacing:0.6px;transform:translateX(-50%)">2.0</div>
<div class="t" style="left:1041.8px;top:702px;font-size:11px;color:#000;letter-spacing:0.6px;transform:translateX(-50%)">4.0</div>
<div class="t" style="left:1117.0px;top:702px;font-size:11px;color:#000;letter-spacing:0.6px;transform:translateX(-50%)">6.0</div>
<div class="t" style="left:1192.2px;top:702px;font-size:11px;color:#000;letter-spacing:0.6px;transform:translateX(-50%)">8.0</div>
<div class="t" style="left:1267.3px;top:702px;font-size:11px;color:#000;letter-spacing:0.6px;transform:translateX(-50%)">10.0</div>
<div class="t" style="left:1342.5px;top:702px;font-size:11px;color:#000;letter-spacing:0.6px;transform:translateX(-50%)">12.0</div>
<div class="t" style="left:1087px;top:719px;font-size:12px;color:#000;letter-spacing:0.45px">Time (sec)</div>
<div class="t" style="left:838.5px;top:554px;font-size:11.5px;color:#000;letter-spacing:0.8px;transform-origin:0 0;transform:rotate(-90deg)">Efd</div>
</body></html>
